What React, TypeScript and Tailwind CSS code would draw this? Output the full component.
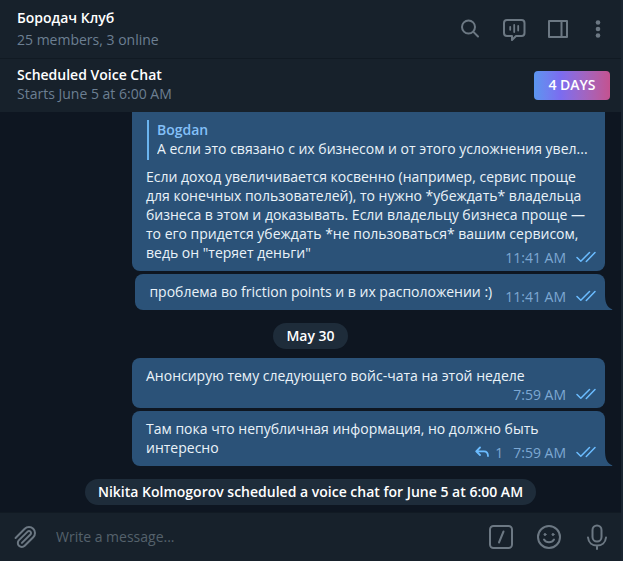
import type { ReactNode } from 'react';

const stroke = {
  fill: 'none',
  stroke: 'currentColor',
  strokeWidth: 2,
  strokeLinecap: 'round' as const,
  strokeLinejoin: 'round' as const,
};

function IconButton({ label, narrow, children }: { label: string; narrow?: boolean; children: ReactNode }) {
  return (
    <button
      type="button"
      aria-label={label}
      className={`flex h-6 shrink-0 items-center justify-center text-[#6c7883] ${narrow ? 'w-4' : 'w-6'}`}
    >
      {children}
    </button>
  );
}

function SearchIcon() {
  return (
    <svg width="24" height="24" viewBox="0 0 24 24" {...stroke}>
      <circle cx="10.5" cy="10" r="6.5" />
      <path d="M15.4 14.9 20 19.5" />
    </svg>
  );
}

function VoiceChatIcon() {
  return (
    <svg width="24" height="24" viewBox="0 0 24 24" {...stroke}>
      <path d="M5 3h14.5a3 3 0 0 1 3 3v10a3 3 0 0 1-3 3H14L10 23v-4H5a3 3 0 0 1-3-3V6a3 3 0 0 1 3-3z" />
      <path d="M8.200 9.800v3M12.200 8v7M16.200 9v4.500" strokeWidth="1.800" />
    </svg>
  );
}

function PanelIcon() {
  return (
    <svg width="24" height="24" viewBox="0 0 24 24" {...stroke}>
      <path d="M3 4h18v16H3zM15.500 4v16" />
    </svg>
  );
}

function DotsIcon() {
  return (
    <svg width="16" height="24" viewBox="0 0 16 24" fill="currentColor">
      <circle cx="8" cy="5.500" r="2.300" />
      <circle cx="8" cy="12" r="2.300" />
      <circle cx="8" cy="18.500" r="2.300" />
    </svg>
  );
}

function ClipIcon() {
  return (
    <svg width="24" height="24" viewBox="0 0 24 24" {...stroke}>
      <path
        transform="rotate(180 12 12)"
        d="m21.440 11.050-9.190 9.190a6 6 0 0 1-8.490-8.490l8.570-8.570A4 4 0 1 1 18 8.840l-8.590 8.570a2 2 0 0 1-2.830-2.830l8.490-8.480"
      />
    </svg>
  );
}

function CommandIcon() {
  return (
    <svg width="26" height="26" viewBox="0 0 26 26" className="shrink-0" {...stroke}>
      <rect x="2" y="2" width="22" height="22" rx="3.500" />
      <path d="M15.500 7.500l-4.500 11" />
    </svg>
  );
}

function SmileIcon() {
  return (
    <svg width="26" height="26" viewBox="0 0 26 26" className="shrink-0" {...stroke}>
      <circle cx="13" cy="13" r="11" />
      <path d="M8 15.500c2.200 3.600 7.800 3.600 10 0" />
      <circle cx="9" cy="10.500" r="1" fill="currentColor" strokeWidth="1" />
      <circle cx="17" cy="10.500" r="1" fill="currentColor" strokeWidth="1" />
    </svg>
  );
}

function MicIcon() {
  return (
    <svg width="24" height="28" viewBox="0 0 24 28" className="shrink-0" {...stroke}>
      <rect x="7.500" y="2.500" width="9" height="16" rx="4.500" />
      <path d="M3 14.500c.5 5 4.200 8 9 8s8.500-3 9-8M12 22.500v3.500" />
    </svg>
  );
}

function Checks() {
  return (
    <svg
      width="20"
      height="12"
      viewBox="0 0 20 12"
      fill="none"
      stroke="#6bbcff"
      strokeWidth="1.500"
      strokeLinecap="round"
      strokeLinejoin="round"
    >
      <path d="M1 6.500 4.800 10.300 13.500 1.500M10.300 10.500 19 1.500" />
    </svg>
  );
}

function Meta({ time, replies }: { time: string; replies?: number }) {
  return (
    <span className="flex h-[18px] items-center text-[#7da8d3]">
      {replies !== undefined && (
        <span className="mr-[10px] flex items-center gap-[6px]">
          <svg
            width="14"
            height="12"
            viewBox="0 0 14 12"
            fill="none"
            stroke="#6bbcff"
            strokeWidth="1.800"
            strokeLinecap="round"
            strokeLinejoin="round"
          >
            <path d="M5 1.500 1.200 5.300 5 9M1.500 5.300H9c2.500 0 4 1.500 4 4.700" />
          </svg>
          {replies}
        </span>
      )}
      <time className="mr-[10px]">{time}</time>
      <Checks />
    </span>
  );
}

function Tail() {
  return (
    <svg width="8" height="16" viewBox="0 0 8 16" className="absolute bottom-0 left-full" fill="#2b5278">
      <path d="M0 0c0 8 1.500 13 7 15.200.6.300.4.800-.3.800H0z" />
    </svg>
  );
}

function Pill({ children }: { children: ReactNode }) {
  return (
    <div className="mt-[10px] mb-[6px] self-center rounded-full bg-[#1e2c3a] px-[13px] py-1 leading-[18px] font-semibold text-white">
      {children}
    </div>
  );
}

const bubble = 'relative mr-4 shrink-0 bg-[#2b5278] pt-2 pr-[9px] pb-[5px] pl-[14px] text-[#eaf2f9]';

export default function App() {
  return (
    <div className="flex h-screen flex-col overflow-hidden border-r-2 border-[#1a2531] bg-[#0e1621] font-['Open_Sans','Noto_Sans',sans-serif] text-[14px] leading-[19px]">
      <header className="flex h-[59px] shrink-0 items-center justify-between border-b border-[#111a23] bg-[#17212b] pr-[15px] pl-[17px]">
        <div className="flex flex-col gap-[3px] pb-0.5">
          <h1 className="font-semibold text-white">Бородач Клуб</h1>
          <p className="text-[#6c7f92]">25 members, 3 online</p>
        </div>
        <nav className="flex gap-5">
          <IconButton label="Search"><SearchIcon /></IconButton>
          <IconButton label="Voice chat"><VoiceChatIcon /></IconButton>
          <IconButton label="Info panel"><PanelIcon /></IconButton>
          <IconButton label="More" narrow><DotsIcon /></IconButton>
        </nav>
      </header>

      <section className="flex h-[53px] shrink-0 items-center justify-between bg-[#17212b] pr-[11px] pl-[17px]">
        <div className="pb-1">
          <h2 className="font-semibold text-white">Scheduled Voice Chat</h2>
          <p className="text-[#6c7f92]">Starts June 5 at 6:00 AM</p>
        </div>
        <button
          type="button"
          className="h-[29px] w-[76px] rounded-[4px] bg-linear-to-r from-[#5a95ef] via-[#7b6cf0] via-35% to-[#c4528f] pb-0.5 font-semibold text-white"
        >
          4 DAYS
        </button>
      </section>

      <main className="flex min-h-0 flex-1 flex-col items-end justify-end gap-[3px] overflow-hidden pb-px">
        <article className={`${bubble} w-[473px] max-w-[90%] rounded-b-lg`}>
          <blockquote className="mr-[5px] mb-[7px] ml-px border-l-2 border-[#6bb5f0] pb-0.5 pl-2">
            <div className="font-semibold text-[#84c0f8]">Bogdan</div>
            <div className="truncate">А если это связано с их бизнесом и от этого усложнения увел...</div>
          </blockquote>
          <p className="flow-root">
            Если доход увеличивается косвенно (например, сервис проще для конечных пользователей), то нужно *убеждать* владельца бизнеса в этом и доказывать. Если владельцу бизнеса проще — то его придется убеждать *не пользоваться* вашим сервисом, ведь он "теряет деньги"
            <span className="float-right mt-[5px] ml-[14px]"><Meta time="11:41 AM" /></span>
          </p>
        </article>
        <article className={`${bubble} rounded-lg rounded-br-none`}>
          <p className="flow-root">
            проблема во friction points и в их расположении :)
            <span className="float-right mt-[5px] ml-[13px]"><Meta time="11:41 AM" /></span>
          </p>
          <Tail />
        </article>

        <Pill>May 30</Pill>

        <article className={`${bubble} w-[473px] max-w-[90%] rounded-lg`}>
          <p>Анонсирую тему следующего войс-чата на этой неделе</p>
          <div className="flex justify-end"><Meta time="7:59 AM" /></div>
        </article>
        <article className={`${bubble} w-[473px] max-w-[90%] rounded-lg rounded-br-none`}>
          <p className="flow-root">
            Там пока что непубличная информация, но должно быть интересно
            <span className="float-right mt-[5px] ml-[14px]"><Meta time="7:59 AM" replies={1} /></span>
          </p>
          <Tail />
        </article>

        <Pill>Nikita Kolmogorov scheduled a voice chat for June 5 at 6:00 AM</Pill>
      </main>

      <footer className="flex h-[49px] shrink-0 items-center border-t border-[#111a23] bg-[#17212b] pr-3 pl-[13px]">
        <IconButton label="Attach"><ClipIcon /></IconButton>
        <input
          type="text"
          aria-label="Message"
          placeholder="Write a message..."
          className="ml-[19px] min-w-0 flex-1 bg-transparent pb-0.5 text-white outline-none placeholder:text-[#55616c]"
        />
        <div className="flex gap-6">
          <IconButton label="Commands"><CommandIcon /></IconButton>
          <IconButton label="Emoji"><SmileIcon /></IconButton>
          <IconButton label="Record voice"><MicIcon /></IconButton>
        </div>
      </footer>
    </div>
  );
}
